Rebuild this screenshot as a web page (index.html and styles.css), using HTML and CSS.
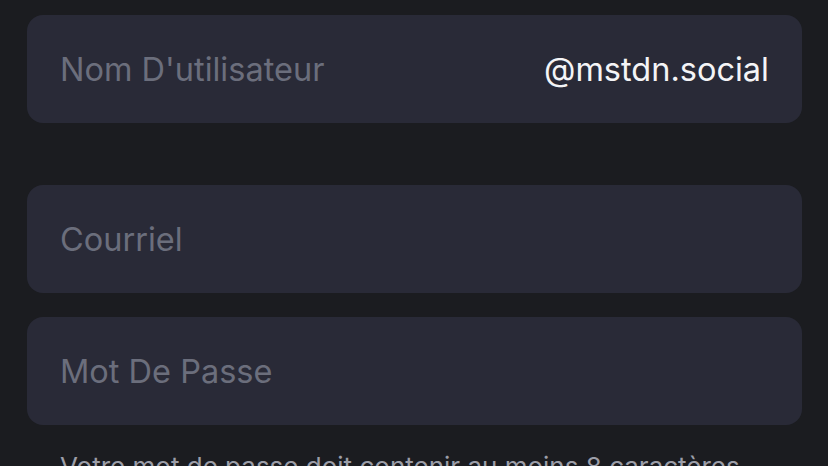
FILE: index.html
```html
<!DOCTYPE html>
<html>

<head>
  <meta charset="utf-8" />
  <meta name="viewport" content="width=device-width, initial-scale=1" />
  <title>Inscription</title>
  <link rel="stylesheet" href="styles.css">
</head>

<body>
  <div class="form">
    <!-- username -->
    <div class="field">
      <span class="placeholder">Nom D'utilisateur</span>
      <span class="domain">@mstdn.social</span>
    </div>

    <div class="group">
      <div class="field">
        <span class="placeholder">Courriel</span>
      </div>
      <div class="field">
        <span class="placeholder">Mot De Passe</span>
      </div>
    </div>

    <p class="hint">Votre mot de passe doit contenir au moins 8 caractères</p>
  </div>
</body>

</html>
```

FILE: styles.css
```css
body {
  margin: 0;
  background: #1b1c20;
  font-family: Inter, "Noto Sans", sans-serif;
  overflow: hidden;
}

.form {
  padding: 15px 26px 0 27px;
  display: flex;
  flex-direction: column;
  gap: 62px;
}

.group {
  display: flex;
  flex-direction: column;
  gap: 24px;
}

.field {
  height: 108px;
  background: #292a37;
  border-radius: 16px;
  display: flex;
  align-items: center;
  justify-content: space-between;
  padding: 0 33px;
  font-size: 32.5px;
}

.placeholder {
  color: #6b6e7c;
}

.domain {
  color: #f4f4f6;
}

.hint {
  margin: -36px 0 0 33px;
  color: #9c9ea8;
  font-size: 26px;
  white-space: nowrap;
}
```
